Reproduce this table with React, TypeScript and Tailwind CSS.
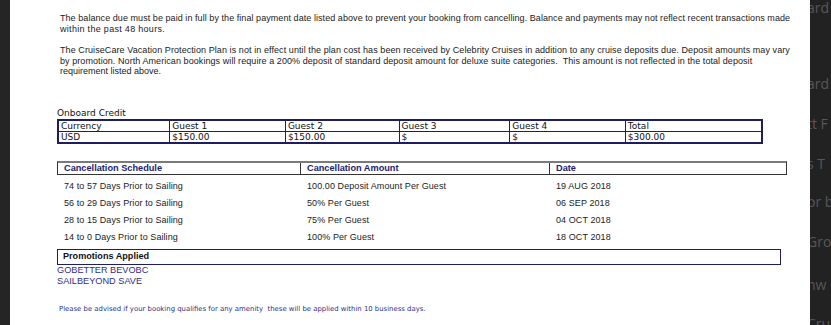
import React from "react";

const arial = { fontFamily: '"Liberation Sans", Arial, sans-serif' };
const verdana = { fontFamily: '"DejaVu Sans", Verdana, sans-serif' };

export default function App() {
  const rows = [
    ["74 to 57 Days Prior to Sailing", "100.00 Deposit Amount Per Guest", "19 AUG 2018"],
    ["56 to 29 Days Prior to Sailing", "50% Per Guest", "06 SEP 2018"],
    ["28 to 15 Days Prior to Sailing", "75% Per Guest", "04 OCT 2018"],
    ["14 to 0 Days Prior to Sailing", "100% Per Guest", "18 OCT 2018"],
  ];
  const sideWords = [
    ["ard", "mt-[-2px]"],
    ["ard", "mt-[56px]"],
    ["tt F", "mt-[20px]"],
    ["s T", "mt-[20px]"],
    ["or b", "mt-[18px]"],
    ["Grou", "mt-[20px]"],
    ["nw", "mt-[23px]"],
    ["Cru", "mt-[19px]"],
  ];
  return (
    <div className="flex h-[325px] w-[831px] overflow-hidden bg-white">
      <div className="w-[10px] shrink-0 bg-[#252525]" />
      <div className="min-w-0 flex-1 overflow-hidden bg-white" style={arial}>
        <div className="pl-[50px] pt-[13px] text-[9px] leading-[10.5px] text-[#1a1a1a]">
          <div className="whitespace-nowrap tracking-[0.06px]">
            The balance due must be paid in full by the final payment date listed above to prevent your booking from cancelling. Balance and payments may not reflect recent transactions made
          </div>
          <div className="whitespace-nowrap tracking-[0.3px]">within the past 48 hours.</div>
          <div className="mt-[11px] whitespace-nowrap tracking-[0.08px]">
            The CruiseCare Vacation Protection Plan is not in effect until the plan cost has been received by Celebrity Cruises in addition to any cruise deposits due. Deposit amounts may vary
          </div>
          <div className="whitespace-pre tracking-[0.07px]">
            by promotion. North American bookings will require a 200% deposit of standard deposit amount for deluxe suite categories.  This amount is not reflected in the total deposit
          </div>
          <div className="whitespace-nowrap">requirement listed above.</div>
        </div>

        <div className="pl-[47px]">
          <div className="mt-[31px] text-[9px] leading-[11px] text-[#111]" style={verdana}>
            Onboard Credit
          </div>
          <table
            className="w-[706px] border-collapse border-2 border-[#1e1d60] text-[9px] leading-[10px] text-[#111]"
            style={verdana}
          >
            <tbody>
              <tr>
                {[
                  ["Currency", "w-[112px]"],
                  ["Guest 1", "w-[116px]"],
                  ["Guest 2", "w-[114px]"],
                  ["Guest 3", "w-[111px]"],
                  ["Guest 4", "w-[116px]"],
                  ["Total", "w-[137px]"],
                ].map(([t, w]) => (
                  <td key={t} className={`${w} border border-[#1e1d60] px-[2px] py-0 text-left`}>
                    {t}
                  </td>
                ))}
              </tr>
              <tr>
                {["USD", "$150.00", "$150.00", "$", "$", "$300.00"].map((t, i) => (
                  <td key={i} className="border border-[#1e1d60] px-[2px] py-0 text-left">
                    {t}
                  </td>
                ))}
              </tr>
            </tbody>
          </table>

          <div className="mt-[17px] flex h-[14px] w-[730px] border border-[#333] border-t-2 border-t-[#7a7a7a] text-[9.2px] font-bold leading-[11px] text-[#23226e]">
            <div className="w-[243px] border-r border-[#333] pl-[6px]">Cancellation Schedule</div>
            <div className="w-[249px] border-r border-[#333] pl-[6px]">Cancellation Amount</div>
            <div className="flex-1 pl-[6px]">Date</div>
          </div>

          <div className="mt-[3px] text-[9px] leading-[17.3px] tracking-[0.08px] text-[#222]">
            {rows.map((r, i) => (
              <div key={i} className="flex">
                <div className="w-[243px] pl-[7px]">{r[0]}</div>
                <div className="w-[249px] pl-[7px]">{r[1]}</div>
                <div className="pl-[7px]">{r[2]}</div>
              </div>
            ))}
          </div>

          <div className="mt-[2px] h-[16px] w-[724px] border-[1.5px] border-[#1e1d60] pl-[5px] text-[9.1px] font-bold leading-[12px] text-[#111]">
            Promotions Applied
          </div>
          <div className="text-[9.2px] leading-[11.5px] text-[#2e2e86]">
            <div>GOBETTER BEVOBC</div>
            <div>SAILBEYOND SAVE</div>
          </div>
          <div
            className="mt-[16px] pl-[2px] text-[6.9px] leading-[10px] text-[#2e2e86] whitespace-pre"
            style={verdana}
          >
            Please be advised if your booking qualifies for any amenity  these will be applied within 10 business days.
          </div>
        </div>
      </div>
      <div
        className="w-[21px] shrink-0 overflow-hidden bg-[#222] text-[14px] leading-[20px] text-[#575757]"
        style={{ fontFamily: '"Open Sans", sans-serif' }}
      >
        {sideWords.map(([w, m], i) => (
          <div key={i} className={`${m} -ml-[3px] whitespace-nowrap`}>
            {w}
          </div>
        ))}
      </div>
    </div>
  );
}
